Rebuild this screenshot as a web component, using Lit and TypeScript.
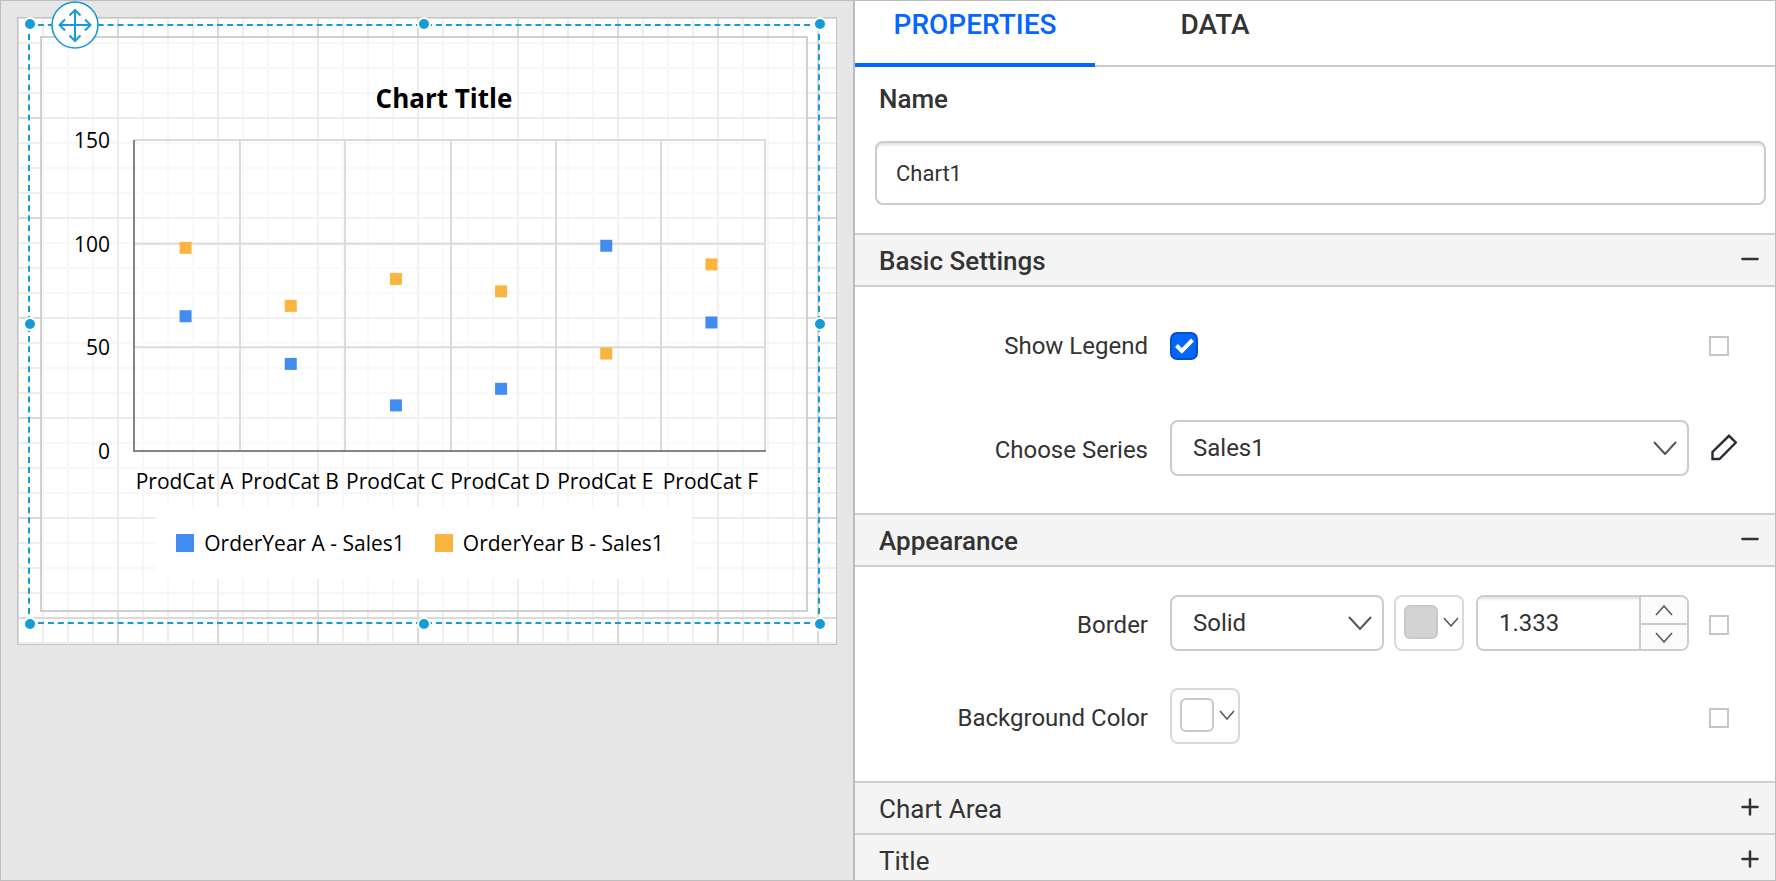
import { LitElement, html, svg, css } from "lit";
import { customElement, property, state } from "lit/decorators.js";
import { classMap } from "lit/directives/class-map.js";

const BLUE = "#418cf0";
const ORANGE = "#fcb441";

const CATEGORIES = ["A", "B", "C", "D", "E", "F"].map((c) => `ProdCat ${c}`);
const SERIES = [
  { name: "OrderYear A - Sales1", color: BLUE, values: [65, 42, 22, 30, 99, 62] },
  { name: "OrderYear B - Sales1", color: ORANGE, values: [98, 70, 83, 77, 47, 90] },
];

/** Scatter chart drawn as a report item. */
@customElement("report-chart")
export class ReportChart extends LitElement {
  static styles = css`
    :host {
      display: flex;
      flex-direction: column;
      align-items: center;
      box-sizing: border-box;
      height: 576px;
      border: 2px solid #d0d0d0;
      background: rgba(255, 255, 255, 0.5);
      color: #000;
      font-family: "Segoe UI", "Open Sans", "Noto Sans", sans-serif;
      font-size: 21px;
    }
    .plot {
      display: block;
      width: 100%;
      height: 469px;
      flex: none;
    }
    .title {
      font-size: 26px;
      font-weight: 700;
    }
    .legend {
      display: flex;
      align-items: center;
      gap: 30px;
      height: 72px;
      margin: 0;
      padding: 0 28px 0 20px;
      list-style: none;
      background: #fff;
    }
    .entry {
      display: flex;
      align-items: center;
      gap: 10px;
      white-space: nowrap;
    }
    .swatch {
      width: 18px;
      height: 18px;
    }
    .swatch.first {
      background: #418cf0;
    }
    .swatch.second {
      background: #fcb441;
    }
  `;

  render() {
    const left = 92;
    const right = 723;
    const top = 102;
    const bottom = 413;
    const step = (right - left) / CATEGORIES.length;
    const y = (v: number) => bottom - (v * (bottom - top)) / 150;
    const gridX = (i: number) => Math.min(right, Math.round(left + step * i + 1));
    return html`
      <svg class="plot" viewBox="0 0 764 469" role="img" aria-label="Chart Title">
        <rect x=${left} y=${top} width=${right - left} height=${bottom - top} fill="#fff" fill-opacity="0.3" />
        <text class="title" x="402" y="70" text-anchor="middle">Chart Title</text>
        ${[50, 100, 150].map(
          (v) => svg`<line x1=${left} x2=${right + 1} y1=${y(v)} y2=${y(v)} stroke="#dbdbdb" stroke-width="2" />`
        )}
        ${CATEGORIES.map(
          (_, i) => svg`<line x1=${gridX(i + 1)} x2=${gridX(i + 1)} y1=${top} y2=${bottom}
            stroke="#dbdbdb" stroke-width="2" />`
        )}
        <path d="M${left} ${top}V${bottom}H${right + 1}" fill="none" stroke="#848484" stroke-width="2" />
        ${[0, 50, 100, 150].map(
          (v) => svg`<text x="68" y=${y(v) + 8} text-anchor="end">${v}</text>`
        )}
        ${CATEGORIES.map(
          (c, i) => svg`<text x=${left + step * (i + 0.5) - 2} y="451" text-anchor="middle">${c}</text>`
        )}
        ${SERIES.map((s) =>
          s.values.map(
            (v, i) => svg`<rect x=${left + step * (i + 0.5) - 7} y=${y(v) - 6} width="12" height="12" fill=${s.color} />`
          )
        )}
      </svg>
      <ul class="legend">
        ${SERIES.map(
          (s, i) => html`<li class="entry">
            <span class=${classMap({ swatch: true, first: i === 0, second: i === 1 })}></span>${s.name}
          </li>`
        )}
      </ul>
    `;
  }
}

/** Design surface with the selected report item. */
@customElement("design-surface")
export class DesignSurface extends LitElement {
  static styles = css`
    :host {
      display: block;
      padding: 16px;
      background: #e6e6e6;
    }
    .page {
      box-sizing: border-box;
      width: 820px;
      padding: 6px 16px 20px 10px;
      border: 1px solid #c4c4c4;
      background-color: #fff;
      background-image: linear-gradient(90deg, #dadada 2px, transparent 2px),
        linear-gradient(#dadada 2px, transparent 2px),
        linear-gradient(90deg, #eeeeee 2px, transparent 2px),
        linear-gradient(#eeeeee 2px, transparent 2px);
      background-size: 100px 100px, 100px 100px, 25px 25px, 25px 25px;
      background-origin: border-box;
    }
    .selection {
      position: relative;
      padding: 10px;
      border: 2px dashed #179bd7;
    }
    .handle {
      position: absolute;
      box-sizing: border-box;
      width: 14px;
      height: 14px;
      border: 2px solid #fff;
      border-radius: 50%;
      background: #179bd7;
    }
    .n {
      top: -9px;
    }
    .m {
      top: calc(50% - 7px);
    }
    .s {
      bottom: -9px;
    }
    .w {
      left: -7px;
    }
    .c {
      left: calc(50% - 7px);
    }
    .e {
      right: -9px;
    }
    .move {
      position: absolute;
      top: -25px;
      left: 21px;
      width: 48px;
      height: 48px;
      padding: 0;
      border: 0;
      background: none;
      cursor: move;
    }
    .move svg {
      display: block;
    }
  `;

  render() {
    return html`
      <div class="page">
        <div class="selection">
          <report-chart></report-chart>
          ${["n w", "n c", "n e", "m w", "m e", "s w", "s c", "s e"].map(
            (p) => html`<span class="handle ${p}"></span>`
          )}
          <button class="move" type="button" aria-label="Move">
            <svg width="48" height="48" viewBox="0 0 48 48" fill="none" stroke="#179bd7" stroke-width="2">
              <circle cx="24" cy="24" r="23" fill="#fff" stroke-width="1.6" />
              <path d="M24 9V40M9 24H40M18.5 14.500L24 9L29.500 14.500M18.500 34.500L24 40L29.500 34.500M14 18.500L8.500 24L14 29.500M34 18.500L39.500 24L34 29.500" />
            </svg>
          </button>
        </div>
      </div>
    `;
  }
}

/** Collapsible group of the property panel. */
@customElement("property-section")
export class PropertySection extends LitElement {
  @property() label = "";
  @property({ type: Boolean, reflect: true }) open = false;

  static styles = css`
    :host {
      display: block;
      margin-top: -2px;
    }
    .header {
      display: flex;
      align-items: center;
      justify-content: space-between;
      box-sizing: border-box;
      width: 100%;
      height: 54px;
      padding: 2px 16px 0 24px;
      border: solid #d0d0d0;
      border-width: 2px 0;
      background: #f4f4f4;
      color: #333;
      font: 400 26px/28px Roboto, sans-serif;
      text-align: left;
    }
    .header.open {
      font-weight: 500;
    }
  `;

  render() {
    return html`
      <button
        class=${classMap({ header: true, open: this.open })}
        type="button"
        aria-expanded=${this.open}
        @click=${() => (this.open = !this.open)}
      >
        ${this.label}
        <svg width="18" height="22" viewBox="0 0 18 22" fill="none" stroke="#333" stroke-width="2.500" stroke-linecap="round">
          <path d=${this.open ? "M1.500 9H16.500" : "M1.500 9H16.500M9 1.500V16.500"} />
        </svg>
      </button>
      ${this.open ? html`<slot></slot>` : ""}
    `;
  }
}

@customElement("property-panel")
export class PropertyPanel extends LitElement {
  @state() private tab = "PROPERTIES";
  @state() private width = "1.333";

  static styles = css`
    :host {
      display: block;
      min-width: 0;
      overflow: hidden;
      border-left: 2px solid #bdbdbd;
      background: #fff;
      color: #333;
      font: 24px/28px Roboto, sans-serif;
    }
    input,
    select,
    button {
      box-sizing: border-box;
      margin: 0;
      color: inherit;
      font: inherit;
    }
    .tabs {
      display: flex;
      height: 66px;
      box-sizing: border-box;
      border-bottom: 2px solid #ccc;
    }
    .tab {
      width: 240px;
      height: 66px;
      padding: 0 0 14px;
      border: 0;
      border-bottom: 4px solid transparent;
      background: none;
      font-size: 28px;
      font-weight: 500;
    }
    .tab.active {
      border-color: #0565ff;
      color: #0565ff;
    }
    .name {
      display: flex;
      flex-direction: column;
      gap: 28px;
      padding: 18px 9px 30px 20px;
    }
    .name label {
      padding-left: 4px;
      font-size: 26px;
      font-weight: 500;
    }
    .text {
      width: 100%;
      height: 64px;
      padding: 0 19px;
      border: 2px solid #ccc;
      border-radius: 8px;
      outline: none;
      background: #fff;
      box-shadow: inset 0 3px 3px -1px rgba(0, 0, 0, 0.12);
    }
    .name .text {
      font-size: 22px;
    }
    .body {
      display: grid;
      gap: 37px;
      padding: 28px 46px 39px 0;
    }
    .body.basic {
      gap: 46px;
      padding-top: 31px;
    }
    .row {
      display: grid;
      grid-template-columns: 315px minmax(0, 1fr) 20px;
      align-items: center;
      height: 56px;
    }
    .caption {
      padding: 4px 22px 0 0;
      text-align: right;
    }
    .row.tick .caption {
      padding-top: 0;
    }
    .field {
      display: flex;
      margin-right: 20px;
    }
    .select {
      position: relative;
      flex: 1;
      min-width: 0;
    }
    .select select {
      width: 100%;
      height: 56px;
      padding: 0 48px 0 21px;
      border: 2px solid #ccc;
      border-radius: 8px;
      background: #fff;
      appearance: none;
      outline: none;
    }
    .select svg {
      position: absolute;
      top: 21px;
      right: 12px;
      pointer-events: none;
    }
    .check {
      position: relative;
      width: 28px;
      height: 28px;
    }
    .check input {
      display: block;
      width: 28px;
      height: 28px;
      border: 2px solid #ccc;
      border-radius: 7px;
      background: #fff;
      appearance: none;
    }
    .check input:checked {
      border-color: #0450c4;
      background: #0565ff;
    }
    .check svg {
      position: absolute;
      inset: 0;
      pointer-events: none;
    }
    .mark {
      width: 20px;
      height: 20px;
      border: 2px solid #c6c6c6;
      background: #fff;
      appearance: none;
    }
    .row:not(.tick) .mark {
      margin-top: 4px;
    }
    .color {
      display: flex;
      align-items: center;
      justify-content: space-between;
      flex: none;
      width: 70px;
      height: 56px;
      padding: 0 3px 2px 8px;
      border: 2px solid #dadada;
      border-radius: 8px;
      background: #fff;
    }
    .chip {
      box-sizing: border-box;
      width: 34px;
      height: 34px;
      border: 2px solid #c8c8c8;
      border-radius: 6px;
    }
    .chip.grey {
      background: #d3d3d3;
    }
    .split {
      gap: 10px;
    }
    .number {
      display: grid;
      grid-template: 1fr 1fr / 1fr 48px;
      box-sizing: border-box;
      flex: none;
      width: 213px;
      height: 56px;
      margin-left: 2px;
      overflow: hidden;
      border: 2px solid #ccc;
      border-radius: 8px;
    }
    .number input {
      grid-row: 1 / 3;
      width: 100%;
      min-width: 0;
      padding: 0 0 0 21px;
      border: 0;
      outline: none;
      background: #fff;
      box-shadow: inset 0 3px 3px -1px rgba(0, 0, 0, 0.12);
    }
    .spin {
      display: grid;
      place-items: center;
      min-height: 0;
      padding: 0;
      border: 0 solid #ccc;
      border-left-width: 2px;
      background: #fbfbfb;
    }
    .spin.down {
      border-top-width: 2px;
    }
    .edit {
      display: grid;
      place-items: center;
      width: 28px;
      height: 28px;
      padding: 0;
      border: 0;
      background: none;
    }
  `;

  private chevron(w: number, h: number, stroke = 2, up = false) {
    const d = up ? `M1 ${h - 1}L${w / 2} 1L${w - 1} ${h - 1}` : `M1 1L${w / 2} ${h - 1}L${w - 1} 1`;
    return html`<svg width=${w} height=${h} viewBox="0 0 ${w} ${h}" fill="none" stroke="#555" stroke-width=${stroke}>
      <path d=${d} />
    </svg>`;
  }

  private nudge(by: number) {
    this.width = (Number(this.width) + by).toFixed(3);
  }

  render() {
    return html`
      <div class="tabs" role="tablist">
        ${["PROPERTIES", "DATA"].map(
          (t) => html`<button
            class=${classMap({ tab: true, active: t === this.tab })}
            type="button"
            role="tab"
            aria-selected=${t === this.tab}
            @click=${() => (this.tab = t)}
          >
            ${t}
          </button>`
        )}
      </div>
      <div class="name">
        <label for="name">Name</label>
        <input class="text" id="name" type="text" value="Chart1" />
      </div>

      <property-section label="Basic Settings" open>
        <div class="body basic">
          <div class="row tick">
            <label class="caption" for="legend">Show Legend</label>
            <div class="field">
              <span class="check">
                <input id="legend" type="checkbox" checked />
                <svg width="28" height="28" viewBox="0 0 28 28" fill="none" stroke="#fff" stroke-width="4">
                  <path d="M6.500 13.500L11.800 18.800L22.500 8" />
                </svg>
              </span>
            </div>
            <input class="mark" type="checkbox" aria-label="Show Legend expression" />
          </div>
          <div class="row">
            <label class="caption" for="series">Choose Series</label>
            <div class="field">
              <span class="select">
                <select id="series">
                  <option>Sales1</option>
                </select>
                ${this.chevron(24, 14)}
              </span>
            </div>
            <button class="edit" type="button" aria-label="Edit series">
              <svg width="28" height="28" viewBox="0 0 28 28" fill="none" stroke="#2b2b33" stroke-width="2.400">
                <path d="M3.500 25V18L20 1.800L26.800 8.500L10.500 25Z" />
              </svg>
            </button>
          </div>
        </div>
      </property-section>

      <property-section label="Appearance" open>
        <div class="body">
          <div class="row">
            <label class="caption" for="border">Border</label>
            <div class="field split">
              <span class="select">
                <select id="border">
                  <option>Solid</option>
                </select>
                ${this.chevron(24, 14)}
              </span>
              <button class="color" type="button" aria-label="Border color">
                <span class="chip grey"></span>${this.chevron(16, 10, 1.5)}
              </button>
              <div class="number">
                <input type="text" inputmode="decimal" aria-label="Border width" .value=${this.width} />
                <button class="spin" type="button" aria-label="Increase" @click=${() => this.nudge(1)}>
                  ${this.chevron(18, 11, 1.5, true)}
                </button>
                <button class="spin down" type="button" aria-label="Decrease" @click=${() => this.nudge(-1)}>
                  ${this.chevron(18, 11, 1.5)}
                </button>
              </div>
            </div>
            <input class="mark" type="checkbox" aria-label="Border expression" />
          </div>
          <div class="row">
            <label class="caption" for="background">Background Color</label>
            <div class="field">
              <button class="color" id="background" type="button">
                <span class="chip"></span>${this.chevron(16, 10, 1.5)}
              </button>
            </div>
            <input class="mark" type="checkbox" aria-label="Background Color expression" />
          </div>
        </div>
      </property-section>

      <property-section label="Chart Area"></property-section>
      <property-section label="Title"></property-section>
    `;
  }
}

@customElement("app-root")
export class AppRoot extends LitElement {
  static styles = css`
    :host {
      display: grid;
      grid-template-columns: auto minmax(0, 1fr);
      box-sizing: border-box;
      height: 100vh;
      overflow: hidden;
      border: 1px solid #bdbdbd;
    }
  `;

  render() {
    return html`<design-surface></design-surface><property-panel></property-panel>`;
  }
}
